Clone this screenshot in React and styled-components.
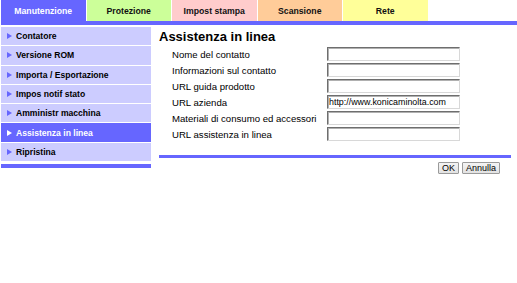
import React from "react";
import styled, { createGlobalStyle } from "styled-components";

const BLUE = "#6666ff";
const LAV = "#ccccff";

const Global = createGlobalStyle`
  html, body { margin: 0; padding: 0; background: #fff; }
  body { font-family: "Liberation Sans", Arial, sans-serif; color: #000; }
`;

const Page = styled.div`
  padding-left: 1px;
  width: 516px;
`;

const TabBar = styled.div`
  display: flex;
  gap: 1px;
  height: 21px;
  border-bottom: 4px solid ${BLUE};
`;

const Tab = styled.div`
  width: 84.5px;
  height: 21px;
  display: flex;
  align-items: center;
  justify-content: center;
  background: ${(p) => p.$bg};
  color: ${(p) => (p.$active ? "#fff" : "#111")};
  font-weight: bold;
  font-size: 8.7px;
`;

const Body = styled.div`
  display: flex;
  margin-top: 2px;
`;

const Sidebar = styled.div`
  width: 150px;
  display: flex;
  flex-direction: column;
`;

const NavList = styled.div`
  display: flex;
  flex-direction: column;
  gap: 1px;
`;

const NavItem = styled.div`
  height: 18.3px;
  display: flex;
  align-items: center;
  padding-left: 6px;
  gap: 4px;
  background: ${(p) => (p.$active ? BLUE : LAV)};
  color: ${(p) => (p.$active ? "#fff" : "#000")};
  font-weight: bold;
  font-size: 8.6px;
`;

const Arrow = styled.span`
  width: 0;
  height: 0;
  border-left: 5px solid ${(p) => (p.$active ? "#fff" : BLUE)};
  border-top: 3px solid transparent;
  border-bottom: 3px solid transparent;
`;

const SideRule = styled.div`
  margin-top: 3px;
  height: 4px;
  background: ${BLUE};
`;

const Main = styled.div`
  margin-left: 8px;
  width: 352px;
  display: flex;
  flex-direction: column;
`;

const Title = styled.div`
  margin-top: 2px;
  height: 16px;
  line-height: 16px;
  font-size: 13px;
  font-weight: bold;
`;

const Form = styled.div`
  margin-top: 2px;
  padding-left: 13px;
  display: grid;
  grid-template-columns: 155px 133px;
  row-gap: 2px;
`;

const Label = styled.div`
  height: 14px;
  display: flex;
  align-items: center;
  font-size: 9.6px;
  white-space: nowrap;
`;

const Input = styled.input`
  box-sizing: border-box;
  width: 133px;
  height: 14px;
  margin: 0;
  padding: 0 0 0 1px;
  border: 1px solid;
  border-color: #6e6e6e #d8d8d8 #d8d8d8 #6e6e6e;
  box-shadow: inset 1px 1px 0 #b0b0b0;
  background: #fff;
  font-family: "Liberation Sans", Arial, sans-serif;
  font-size: 8.9px;
  color: #000;
  outline: none;
`;

const Rule = styled.div`
  margin-top: 14px;
  height: 3px;
  background: ${BLUE};
`;

const Buttons = styled.div`
  margin-top: 4px;
  padding-right: 11px;
  display: flex;
  justify-content: flex-end;
  gap: 3px;
`;

const Button = styled.button`
  box-sizing: border-box;
  height: 12px;
  margin: 0;
  padding: 0 3px;
  border: 1px solid #9a9a9a;
  border-radius: 1px;
  background: linear-gradient(#f4f4f4, #e2e2e2);
  font-family: "Liberation Sans", Arial, sans-serif;
  font-size: 9px;
  line-height: 10px;
  color: #000;
`;

const tabs = [
  { label: "Manutenzione", bg: BLUE, active: true },
  { label: "Protezione", bg: "#ccff99" },
  { label: "Impost stampa", bg: "#ffcccc" },
  { label: "Scansione", bg: "#ffcc99" },
  { label: "Rete", bg: "#ffff99" },
];

const nav = [
  "Contatore",
  "Versione ROM",
  "Importa / Esportazione",
  "Impos notif stato",
  "Amministr macchina",
  "Assistenza in linea",
  "Ripristina",
];

const fields = [
  ["Nome del contatto", ""],
  ["Informazioni sul contatto", ""],
  ["URL guida prodotto", ""],
  ["URL azienda", "http://www.konicaminolta.com"],
  ["Materiali di consumo ed accessori", ""],
  ["URL assistenza in linea", ""],
];

export default function App() {
  return (
    <Page>
      <Global />
      <TabBar>
        {tabs.map((t) => (
          <Tab key={t.label} $bg={t.bg} $active={t.active}>
            {t.label}
          </Tab>
        ))}
      </TabBar>
      <Body>
        <Sidebar>
          <NavList>
            {nav.map((n) => {
              const active = n === "Assistenza in linea";
              return (
                <NavItem key={n} $active={active}>
                  <Arrow $active={active} />
                  {n}
                </NavItem>
              );
            })}
          </NavList>
          <SideRule />
        </Sidebar>
        <Main>
          <Title>Assistenza in linea</Title>
          <Form>
            {fields.map(([l, v]) => (
              <React.Fragment key={l}>
                <Label>{l}</Label>
                <Input defaultValue={v} />
              </React.Fragment>
            ))}
          </Form>
          <Rule />
          <Buttons>
            <Button>OK</Button>
            <Button>Annulla</Button>
          </Buttons>
        </Main>
      </Body>
    </Page>
  );
}
